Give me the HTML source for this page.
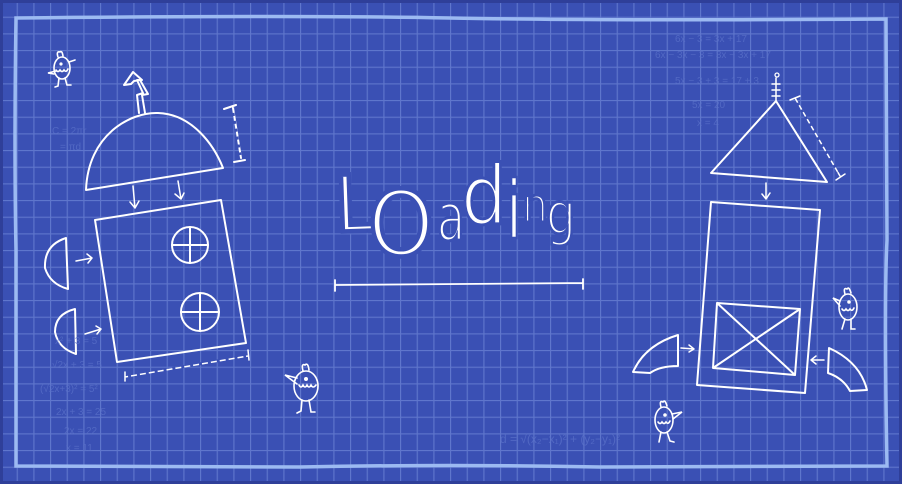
<!DOCTYPE html>
<html><head><meta charset="utf-8"><style>
html,body{margin:0;padding:0;background:#2b3a8f;}
svg{display:block}
</style></head><body>
<svg width="902" height="484" viewBox="0 0 902 484" xmlns="http://www.w3.org/2000/svg">
<defs>
<pattern id="g" width="16.667" height="16.667" patternUnits="userSpaceOnUse">
<rect width="16.667" height="16.667" fill="#3a50b4"/>
<path d="M0 0.5H16.667M0.5 0V16.667" stroke="#5f76cc" stroke-width="1.3"/>
</pattern>
</defs>
<rect x="0" y="0" width="902" height="484" fill="#2f3f99"/>
<rect x="3" y="3" width="896" height="478" fill="url(#g)"/>
<path d="M16 18 Q300 15 450 18 T886 19 L887 240 Q884 300 887 466 L600 467 Q450 464 300 467 L16 466 L16 250 Q14 150 16 18Z" fill="none" stroke="#9cbaf2" stroke-width="3.5"/>

<g fill="none" stroke="#fff" stroke-width="2" stroke-linejoin="round" stroke-linecap="round">
<path d="M86 190 C88 135 130 112 158 113 C192 114 214 145 223 168 Z"/>
<path d="M145 113 L142 95 L148 94 L140 80 L134 81 L131 84 L124 85 L133 72 L142 80 L137 80 L143 93 L137 95 L139 113"/>
<path d="M224 109 L236 105 M233 108 L241 158 M234 162 L245 160"/>
<path d="M233 113 L240 155" stroke="#3a50b4" stroke-width="3" stroke-dasharray="3 5" stroke-linecap="butt"/>
<path d="M133 186 L135 208 M130 202 L135 208 L139 201 M178 181 L181 199 M175 194 L181 199 L184 193" stroke-width="1.5"/>
<path d="M95 220 L221 200 L246 343 L117 362 Z"/>
<circle cx="190" cy="245" r="18"/><path d="M172 245 H208 M190 227 V263"/>
<circle cx="200" cy="312" r="19"/><path d="M181 312 H219 M200 293 V331"/>
<path d="M66 238 Q44 245 45 268 Q50 284 68 289 L66 238"/>
<path d="M75 309 Q55 314 55 332 Q58 348 76 354 Z"/>
<path d="M76 261 L92 258 M87 254 L92 258 L88 263 M85 334 L101 329 M96 326 L101 329 L97 334" stroke-width="1.5"/>
<path d="M125 372 L125 381 M125 377 L248 356 M248 350 L249 360" stroke-width="1.5"/>
<path d="M128 376 L246 356" stroke="#3a50b4" stroke-width="3" stroke-dasharray="3 6" stroke-linecap="butt"/>
<path d="M711 173 L776 101 L827 182 Z"/>
<path d="M776 78 V101 M772 84 H780 M772 90 H780 M772 96 H780" stroke-width="1.5"/>
<circle cx="777" cy="75" r="2" stroke-width="1.3"/>
<path d="M790 100 L800 96 M795 98 L840 176 M836 180 L845 174" stroke-width="1.5"/>
<path d="M797 103 L838 172" stroke="#3a50b4" stroke-width="3" stroke-dasharray="3 5" stroke-linecap="butt"/>
<path d="M766 183 V199 M762 194 L766 199 L770 193" stroke-width="1.5"/>
<path d="M711 202 L820 210 L805 393 L697 385 Z"/>
<path d="M717 303 L800 309 L795 375 L713 368 Z M717 303 L795 375 M800 309 L713 368"/>
<path d="M678 335 L678 366 Q660 366 650 373 L633 372 Q645 345 678 335 Z"/>
<path d="M681 348 L694 349 M689 345 L694 349 L689 352" stroke-width="1.5"/>
<path d="M829 348 Q860 362 867 390 L850 391 Q843 378 828 373 Z"/>
<path d="M824 360 L811 360 M816 356 L811 360 L816 364" stroke-width="1.5"/>
<path d="M335 280 L335 291 M335 285 L583 283 M583 279 L583 289" stroke-width="1.8"/>
</g>

<g fill="none" stroke="#fff" stroke-width="1.6" stroke-linecap="round">
<g transform="translate(62,68)"><ellipse cx="0" cy="0" rx="8" ry="11"/><path d="M-4 -11 Q-6 -17 -2 -16 Q0 -18 1 -12 M7 -6 L13 -8 M-6 3 L-14 5 L-8 6 M-6 2 Q-4 5 -2 2 Q0 5 2 2 Q4 5 6 1 M-3 10 L-4 18 L-7 19 M3 10 L5 17 L9 17"/><circle cx="-1" cy="-4" r="0.8" fill="#fff"/></g>
<g transform="translate(306,386)"><ellipse cx="0" cy="0" rx="12" ry="15"/><path d="M-3 -15 Q-5 -23 -1 -21 Q2 -24 3 -16 M-9 -8 L-21 -11 L-9 -2 M-7 -1 Q-5 3 -3 -1 Q-1 3 1 -1 Q3 3 5 -1 Q7 3 10 -1 M-4 14 L-5 25 L-9 27 M3 14 L5 26 L9 26"/><circle cx="0" cy="-7" r="1.2" fill="#fff"/></g>
<g transform="translate(848,307)"><ellipse cx="0" cy="0" rx="9" ry="13"/><path d="M-3 -13 Q-5 -20 -1 -18 Q1 -21 3 -14 M-8 -6 L-15 -9 L-8 -1 M-6 2 Q-4 5 -2 2 Q0 5 2 2 Q4 5 6 1 M-3 12 L-6 22 M3 12 L3 22 L7 22"/><circle cx="1" cy="-5" r="1" fill="#fff"/></g>
<g transform="translate(664,420)"><ellipse cx="0" cy="0" rx="9" ry="13"/><path d="M-3 -13 Q-5 -20 -1 -18 Q1 -21 3 -14 M8 -6 L18 -8 L9 -1 M-6 2 Q-4 5 -2 2 Q0 5 2 2 Q4 5 6 1 M-3 12 L-5 22 M3 12 L6 21 L10 22"/><circle cx="1" cy="-5" r="1" fill="#fff"/></g>
</g>

<g fill="#5a71c9" font-family="Liberation Sans, sans-serif" font-size="10" opacity="0.75">
<text x="52" y="134">C = 2πr</text><text x="60" y="150">= πd</text>
<text x="55" y="344">x² + 3 = 5</text><text x="52" y="368">√2x + 3 = 5</text><text x="40" y="392">(√2x+3)² = 5²</text><text x="56" y="415">2x + 3 = 25</text><text x="64" y="434">2x = 22</text><text x="66" y="451">x = 11</text>
<text x="675" y="42">6x − 3 = 3x + 17</text><text x="655" y="58">6x − 3x − 3 = 3x − 3x + 17</text><text x="675" y="84">5x − 3 + 3 = 17 + 3</text><text x="692" y="108">5x = 20</text><text x="697" y="126">x = 4</text>
<text x="500" y="443" font-size="12">d = √(x₂−x₁)² + (y₂−y₁)²</text>
</g>

<g fill="#fff" stroke="#3a50b4" stroke-width="4.5" font-family="DejaVu Sans, sans-serif">
<text x="334" y="231" font-size="78" transform="rotate(-2 355 200)" textLength="44" lengthAdjust="spacingAndGlyphs">L</text>
<text x="368" y="255" font-size="90" textLength="66" lengthAdjust="spacingAndGlyphs">O</text>
<text x="437" y="240" font-size="66" textLength="28" lengthAdjust="spacingAndGlyphs" stroke-width="3">a</text>
<text x="461" y="224" font-size="82" textLength="46" lengthAdjust="spacingAndGlyphs" stroke-width="3">d</text>
<text x="506" y="238" font-size="80" textLength="16" lengthAdjust="spacingAndGlyphs" stroke-width="2.5">i</text>
<text x="522" y="222" font-size="48" textLength="26" lengthAdjust="spacingAndGlyphs" stroke-width="3">n</text>
<text x="546" y="234" font-size="58" textLength="30" lengthAdjust="spacingAndGlyphs" stroke-width="3">g</text>
</g>
</svg>
</body></html>
